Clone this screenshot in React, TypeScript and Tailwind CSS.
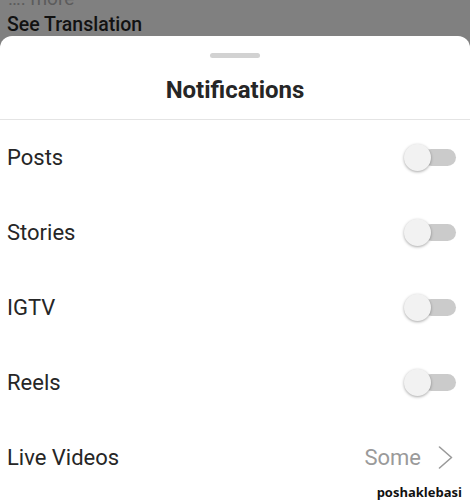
import React from "react";

const font = { fontFamily: "Roboto, 'Liberation Sans', sans-serif" };

function Toggle() {
  return (
    <div className="relative w-[52px] h-[28px] flex items-center">
      <div className="absolute right-0 w-[33px] h-[17px] rounded-full bg-[#cbcbcb]" />
      <div className="absolute left-0 w-[27px] h-[27px] rounded-full bg-[#f2f2f2] shadow-[0_1px_3px_rgba(0,0,0,0.35)]" />
    </div>
  );
}

function Row({ label, right }: { label: string; right: React.ReactNode }) {
  return (
    <div className="h-[75px] flex items-center justify-between pl-[7px] pr-[14px]">
      <span className="text-[22px] text-[#262626] leading-none">{label}</span>
      {right}
    </div>
  );
}

export default function App() {
  return (
    <div className="w-[470px] h-[501px] bg-[#808080] overflow-hidden relative" style={font}>
      <div className="h-[36px] relative">
        <div className="absolute left-[8px] top-[-11px] text-[19px] text-[#5c5c5c] leading-none">…. more</div>
        <div className="absolute left-[7px] top-[15px] text-[19.5px] font-medium text-[#121212] leading-none">See Translation</div>
      </div>
      <div className="bg-white rounded-t-[12px] h-[465px] flex flex-col">
        <div className="flex justify-center pt-[17px]">
          <div className="w-[50px] h-[5px] rounded-full bg-[#d2d2d2]" />
        </div>
        <div className="h-[61px] flex items-center justify-center pt-[3px]">
          <span className="text-[24px] font-bold text-[#262626] leading-none">Notifications</span>
        </div>
        <div className="h-px bg-[#e4e4e4]" />
        <Row label="Posts" right={<Toggle />} />
        <Row label="Stories" right={<Toggle />} />
        <Row label="IGTV" right={<Toggle />} />
        <Row label="Reels" right={<Toggle />} />
        <div className="h-[75px] flex items-center justify-between pl-[7px] pr-[17px]">
          <span className="text-[22px] text-[#262626] leading-none">Live Videos</span>
          <div className="flex items-center gap-[17px]">
            <span className="text-[22px] text-[#9a9a9a] leading-none">Some</span>
            <svg width="15" height="23" viewBox="0 0 15 23" fill="none">
              <path d="M1.5 1 L13.5 11.5 L1.5 22" stroke="#9a9a9a" strokeWidth="1.6" strokeLinecap="round" strokeLinejoin="round" />
            </svg>
          </div>
        </div>
      </div>
      <div className="absolute right-[8px] top-[486px] text-[13px] font-bold text-[#111] leading-none" style={{ fontFamily: "'Open Sans', 'Liberation Sans', sans-serif" }}>
        poshaklebasi
      </div>
    </div>
  );
}
